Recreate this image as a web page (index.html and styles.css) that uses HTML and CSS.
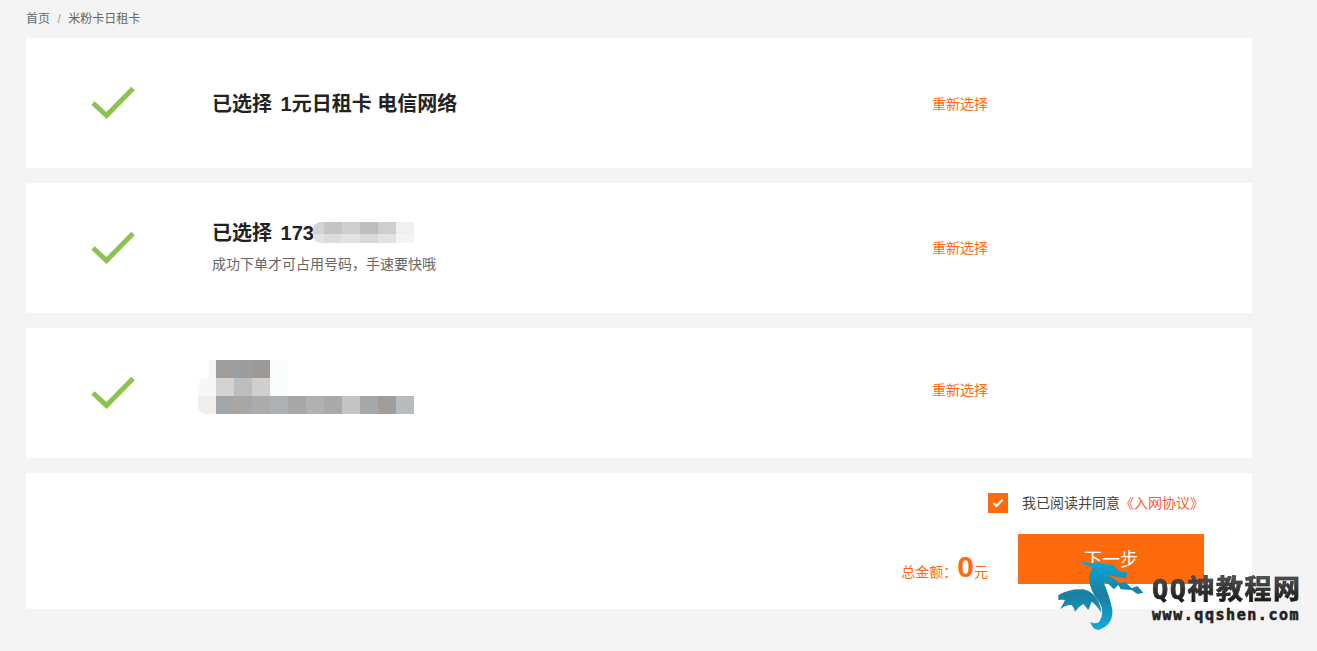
FILE: index.html
```html
<!DOCTYPE html>
<html lang="zh">
<head>
    <meta charset="UTF-8">
    <title>米粉卡日租卡</title>
    <link rel="stylesheet" href="styles.css">
</head>
<body>

<div class="page">
    <div class="crumbs">
        <a href="#">首页</a><span class="crumb-sep">/</span><span>米粉卡日租卡</span>
    </div>

    <div class="card step">
        <div class="step-icon">
            <svg width="44" height="34" viewBox="0 0 44 34"><path d="M2 17 L15.500 29.500 L42 2.500" fill="none" stroke="#8bc34f" stroke-width="5"/></svg>
        </div>
        <div class="step-body body-plan">
            <div class="step-title">已选择 <span class="title-val">1元日租卡 电信网络</span></div>
        </div>
        <a class="step-link link-plan" href="#">重新选择</a>
    </div>

    <div class="card step">
        <div class="step-icon">
            <svg width="44" height="34" viewBox="0 0 44 34"><path d="M2 17 L15.500 29.500 L42 2.500" fill="none" stroke="#8bc34f" stroke-width="5"/></svg>
        </div>
        <div class="step-body body-number">
            <div class="step-title number-line">
                <span>已选择 <span class="title-val">173</span></span>
                <div class="mosaic mosaic-number">
                    <i class="round-tl" style="background:#d4d4d4"></i><i style="background:#c4c4c4"></i><i style="background:#cfcfd2"></i><i style="background:#bdbdbd"></i><i style="background:#cececc"></i><i style="background:#eff0f2"></i>
                    <i class="round-bl" style="background:#e3e3e3"></i><i style="background:#dcdcdc"></i><i style="background:#e4e3e2"></i><i style="background:#d9d9dc"></i><i style="background:#e2e2e0"></i><i style="background:#f4f4f5"></i>
                </div>
            </div>
            <div class="step-note">成功下单才可占用号码，手速要快哦</div>
        </div>
        <a class="step-link" href="#">重新选择</a>
    </div>

    <div class="card step">
        <div class="step-icon">
            <svg width="44" height="34" viewBox="0 0 44 34"><path d="M2 17 L15.500 29.500 L42 2.500" fill="none" stroke="#8bc34f" stroke-width="5"/></svg>
        </div>
        <div class="step-body">
            <div class="mosaic mosaic-address">
                <i class="corner-cell"></i><i style="background:#a09e9c"></i><i style="background:#9b9ea0"></i><i style="background:#9c9997"></i><i style="background:#f9fbfd"></i><i></i><i></i><i></i><i></i><i></i><i></i><i></i>
                <i class="round-tl" style="background:#f8f7f6"></i><i style="background:#d4d3d2"></i><i style="background:#bcbdbe"></i><i style="background:#d0cfcd"></i><i style="background:#fbfcfc"></i><i></i><i></i><i></i><i></i><i></i><i></i><i></i>
                <i class="round-bl" style="background:#f0edea"></i><i style="background:#a3a6a8"></i><i style="background:#a8a7a5"></i><i style="background:#adabab"></i><i style="background:#adb0b4"></i><i style="background:#a9a7a5"></i><i style="background:#b0b1b2"></i><i style="background:#abaaa8"></i><i style="background:#c3c4c5"></i><i style="background:#a6a7a8"></i><i style="background:#a19d9b"></i><i style="background:#b9bcbe"></i>
            </div>
        </div>
        <a class="step-link link-address" href="#">重新选择</a>
    </div>

    <div class="card submit">
        <div class="agree">
            <span class="agree-box">
                <svg width="12" height="10" viewBox="0 0 12 10"><path d="M1.500 5 L4.500 8 L10.500 1.800" fill="none" stroke="#fff" stroke-width="2.200"/></svg>
            </span>
            <span>我已阅读并同意</span><a href="#">《入网协议》</a>
        </div>
        <div class="pay">
            <div class="total">总金额<span class="colon">：</span><b>0</b>元</div>
            <button class="next">下一步</button>
        </div>
    </div>
</div>

<!-- watermark lies over the card -->
<div class="watermark">
    <svg class="dragon" width="120" height="90" viewBox="0 0 360 270">
        <defs>
            <linearGradient id="dragonFill" gradientUnits="userSpaceOnUse" x1="0" y1="30" x2="0" y2="240">
                <stop offset="0" stop-color="#0aa8dc"/>
                <stop offset="0.5" stop-color="#1a7f9f"/>
                <stop offset="1" stop-color="#10aadd"/>
            </linearGradient>
        </defs>
        <path fill="url(#dragonFill)" d="M85 32 L125 40 Q140 35 150 38 L165 42 L190 45 L205 62 L232 68 L228 85 L200 80 L170 75 L190 85 L208 100 L225 95 L245 115 L262 108 L280 128 L262 132 L245 120 L212 118 L205 105 L192 118 L175 102 L160 95 Q180 140 187 180 Q190 225 145 240 Q128 238 120 215 Q135 225 148 215 Q165 190 150 160 Q118 120 118 90 Q118 65 127 55 Z"/>
        <path fill="url(#dragonFill)" d="M25 135 Q60 115 100 118 Q135 125 150 165 L155 190 Q140 165 125 155 Q120 170 115 180 L100 162 Q85 170 75 185 Q72 172 65 165 Q45 165 30 178 Q38 165 45 150 Q35 148 25 150 Z"/>
    </svg>
    <div class="wm-text">
        <div class="wm-name">QQ神教程网</div>
        <div class="wm-url">www.qqshen.com</div>
    </div>
</div>

</body>
</html>
```

FILE: styles.css
```css
* {
    box-sizing: border-box;
}

html, body {
    margin: 0;
    padding: 0;
}

body {
    height: 651px;
    overflow: hidden;
    background-color: #f4f4f4;
    font-family: "Liberation Sans", "Noto Sans CJK SC", sans-serif;
    color: #333;
    position: relative;
}

a {
    text-decoration: none;
}

.page {
    width: 1226px;
    margin-left: 26px;
}

.crumbs {
    height: 38px;
    padding-top: 11px;
    font-size: 12px;
    line-height: 16px;
    color: #666;
}

.crumbs a {
    color: #5f6b78;
}

.crumb-sep {
    margin: 0 7.500px;
    color: #999;
}

.card {
    background-color: #fff;
    margin-bottom: 15px;
}

.step {
    height: 130px;
    display: flex;
    align-items: center;
}

.step-icon {
    width: 186px;
    padding-left: 65px;
    display: flex;
}

.step-body {
    width: 720px;
}

.body-plan {
    margin-top: 2px;
}

.body-number {
    margin-top: -4px;
}

.step-title {
    font-size: 20px;
    font-weight: bold;
    line-height: 30px;
    color: #222;
    white-space: nowrap;
}

.title-val {
    margin-left: 3px;
}

.number-line {
    display: flex;
    align-items: center;
    height: 30px;
    position: relative;
}

.step-note {
    font-size: 14px;
    line-height: 20px;
    margin-top: 6px;
    color: #666;
}

.step-link {
    font-size: 14px;
    color: #ff6a0c;
    margin-top: -2px;
}

.link-plan {
    margin-top: 0;
}

.link-address {
    margin-top: -8px;
}

/* blurred out parts of the shot */
.mosaic {
    display: grid;
    grid-template-columns: repeat(12, 18px);
}

.mosaic i {
    display: block;
    height: 18px;
}

.mosaic-number {
    position: absolute;
    left: 101px;
    top: 4px;
    grid-template-columns: 11px repeat(5, 18px);
    grid-template-rows: 12px 9px;
}

.mosaic-number i {
    height: auto;
}

.mosaic-address {
    margin-left: -14px;
    margin-top: -12px;
}

.corner-cell {
    background: linear-gradient(90deg, transparent 11px, #f5f4f2 11px);
}

.round-tl {
    border-top-left-radius: 8px;
}

.round-bl {
    border-bottom-left-radius: 8px;
}

.submit {
    height: 136px;
    margin-bottom: 0;
    padding-top: 20px;
    padding-right: 48px;
    display: flex;
    flex-direction: column;
    align-items: flex-end;
}

.agree {
    display: flex;
    align-items: center;
    height: 20px;
    font-size: 14px;
    line-height: 18px;
    color: #444;
}

.agree span:not(.agree-box),
.agree a {
    margin-bottom: 1px;
}

.agree a {
    color: #ff5a30;
}

.agree-box {
    width: 20px;
    height: 20px;
    margin-right: 14px;
    background-color: #ff6a0c;
    display: flex;
    align-items: center;
    justify-content: center;
}

.pay {
    display: flex;
    align-items: flex-end;
    margin-top: 21px;
}

.total {
    font-size: 14px;
    line-height: 20px;
    color: #ff6a0c;
    margin-right: 30px;
    margin-bottom: 2px;
}

.colon {
    font-family: "Noto Sans CJK TC", sans-serif;
}

.total b {
    font-size: 30px;
    line-height: 20px;
    font-family: "Liberation Sans", sans-serif;
}

.next {
    width: 186px;
    height: 50px;
    padding: 0 0 2px;
    border: 0;
    background-color: #ff6a0c;
    color: #fff;
    font-size: 18px;
    font-family: inherit;
}

.watermark {
    position: absolute;
    left: 1050px;
    top: 550px;
    display: flex;
}

.wm-text {
    margin-left: -18px;
    margin-top: 25px;
    color: #222;
    font-weight: bold;
}

.wm-name {
    font-size: 27px;
    line-height: 30px;
    letter-spacing: 1.500px;
    font-family: "DejaVu Sans Mono", "Noto Sans CJK SC", monospace;
    background: linear-gradient(180deg, #555, #111);
    -webkit-background-clip: text;
    -webkit-text-fill-color: transparent;
    -webkit-text-stroke: 0.600px rgba(30, 30, 30, 0.6);
    white-space: nowrap;
}

.wm-url {
    font-size: 15px;
    line-height: 14px;
    margin-top: 3px;
    letter-spacing: 1.550px;
    font-family: "DejaVu Sans Mono", monospace;
    -webkit-text-stroke: 0.600px #222;
    white-space: nowrap;
}
```
